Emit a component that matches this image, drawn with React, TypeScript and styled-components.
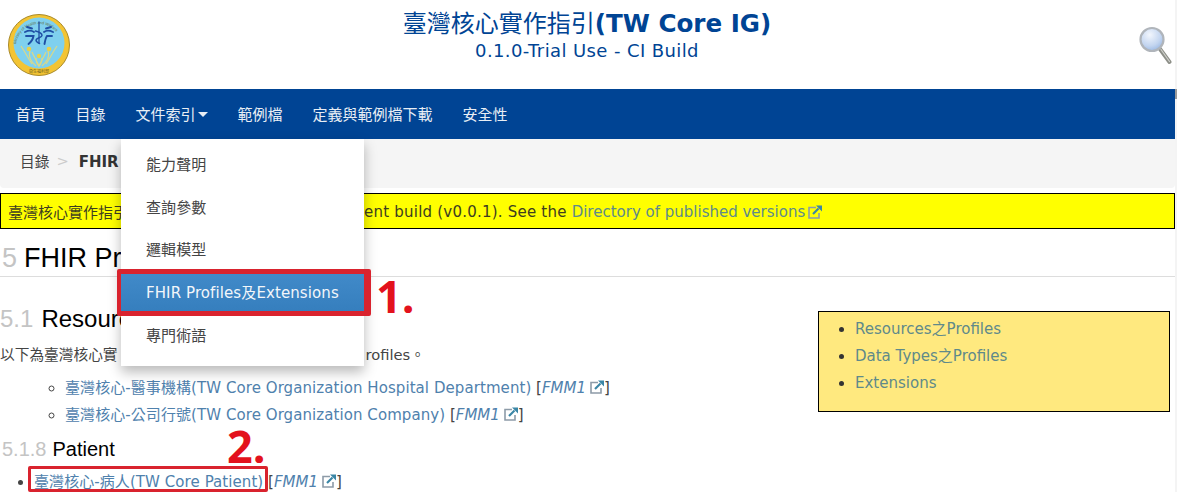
import React from 'react';
import styled, { createGlobalStyle } from 'styled-components';

const GlobalStyle = createGlobalStyle`
  html, body {
    margin: 0;
    padding: 0;
    height: 492px;
    overflow: hidden;
    background: #fff;
  }
  body {
    font-family: "DejaVu Sans", "Noto Sans CJK TC", sans-serif;
    font-size: 15px;
    color: #444;
  }
`;

const Page = styled.div`
  position: relative;
  width: 1175px;
  height: 492px;
  overflow: hidden;
`;

const ScrollTrack = styled.div`
  position: absolute;
  left: 1175px;
  top: 0;
  width: 2px;
  height: 492px;
  background: #f4f4f4;
  &::after {
    content: '';
    position: absolute;
    top: 89px;
    left: 0;
    width: 2px;
    height: 10px;
    background: #9a9a9a;
  }
`;

// HEADER
const Header = styled.header`
  display: flex;
  align-items: flex-start;
  justify-content: space-between;
  height: 89px;
  padding: 14px 3px 0 8px;
  box-sizing: border-box;
`;

const Titles = styled.div`
  flex: 1;
  text-align: center;
  color: #004494;
  padding-right: 35px;
`;

const Title = styled.div`
  font-size: 24.6px;
  font-weight: bold;
  line-height: 28px;
  margin-top: -4px;
`;

const TitleCjk = styled.span`
  font-size: 24px;
  font-weight: 400;
`;

const Subtitle = styled.div`
  font-size: 18px;
  letter-spacing: 0.4px;
  line-height: 26px;
`;

const SearchIcon = styled.svg`
  margin-top: 12px;
`;

// NAV
const Nav = styled.nav`
  display: flex;
  height: 50px;
  padding-left: 0.5px;
  background: #004494;
`;

const NavItem = styled.div`
  display: flex;
  align-items: center;
  gap: 2px;
  padding: 0 15px 1px;
  color: #e8eef5;
  font-size: 15px;
`;

const Caret = styled.span`
  width: 0;
  height: 0;
  margin-top: 1px;
  border-left: 5px solid transparent;
  border-right: 5px solid transparent;
  border-top: 5px solid #e8eef5;
`;

// BREADCRUMB
const Breadcrumb = styled.div`
  display: flex;
  align-items: center;
  height: 49px;
  padding: 0 20px 6px;
  box-sizing: border-box;
  background: #f5f5f5;
  border-radius: 0 0 4px 4px;
  font-size: 14.7px;
  color: #444;
`;

const Separator = styled.span`
  color: #ccc;
  margin: 0 10px 0 7px;
`;

const Current = styled.b`
  color: #333;
  font-size: 15px;
`;

const Notice = styled.div`
  margin-top: 5px;
  height: 36px;
  padding: 1px 7px 0;
  box-sizing: border-box;
  display: flex;
  align-items: center;
  white-space: pre;
  background: #ff0;
  border: 1px solid #000;
  color: #3d3d20;
`;

const Hidden = styled.span<{ $width: number }>`
  display: inline-block;
  width: ${p => p.$width}px;
`;

const Spaced = styled.span`
  letter-spacing: 0.22px;
`;

const NoticeLink = styled.span`
  color: #5d8a8a;
  margin-right: -1px;
`;

// CONTENT
const H1 = styled.h1`
  margin: 13px 0 0;
  padding-bottom: 1px;
  font: 400 27px/33px "Liberation Sans", "Noto Sans CJK TC", sans-serif;
  color: #000;
  border-bottom: 1px solid #ddd;
`;

const Num = styled.span<{ $gap: number; $inset?: number }>`
  color: #c4c4c4;
  margin-left: ${p => p.$inset ?? 0}px;
  margin-right: ${p => p.$gap}px;
`;

const Aside = styled.aside`
  float: right;
  width: 352px;
  height: 101px;
  box-sizing: border-box;
  margin: 34px 5px 0 0;
  background: #ffe97f;
  border: 1px solid #000;
`;

const AsideList = styled.ul`
  margin: 0;
  padding: 4px 0 0 36px;
  list-style: disc;
  color: #222;
`;

const AsideItem = styled.li`
  line-height: 27px;
  color: #333;
`;

const AsideLink = styled.span`
  color: #5f8a8a;
`;

const H2 = styled.h2`
  margin: 26px 0 0;
  font: 400 24px/32px "Liberation Sans", "Noto Sans CJK TC", sans-serif;
  color: #000;
`;

const Para = styled.p`
  margin: 9px 0 0;
  line-height: 22px;
  white-space: pre;
  font-size: 14.7px;
`;

const HiddenInline = styled.span`
  display: inline-block;
  width: 248px;
`;

const List = styled.ul<{ $kind: string; $indent: number }>`
  margin: 0;
  padding-left: ${p => p.$indent}px;
  list-style: ${p => p.$kind};
`;

const SubList = styled(List)`
  margin-top: 9px;
`;

const Item = styled.li`
  line-height: 27px;
  white-space: nowrap;
`;

const Link = styled.span`
  color: #4f81ad;
  letter-spacing: 0.07px;
`;

const Fmm = styled.i`
  color: #4f81ad;
`;

const H3 = styled.h3`
  margin: 6px 0 0 2px;
  font: 400 20px/28px "Liberation Sans", "Noto Sans CJK TC", sans-serif;
  color: #000;
`;

const PatientList = styled(List)`
  margin-top: 6px;
`;

// DROPDOWN
const Menu = styled.div`
  position: absolute;
  left: 121px;
  top: 139px;
  width: 243px;
  height: 227px;
  box-sizing: border-box;
  padding-top: 3px;
  background: #fff;
  box-shadow: 0 6px 12px rgba(0, 0, 0, 0.28);
`;

const MenuItem = styled.div<{ $active?: boolean }>`
  height: 42.75px;
  display: flex;
  align-items: center;
  padding-left: 25px;
  box-sizing: border-box;
  letter-spacing: 0.1px;
  color: ${p => (p.$active ? '#f2f6fa' : '#444')};
  background: ${p => (p.$active ? 'linear-gradient(#428bca, #357ebd)' : 'transparent')};
`;

// ANNOTATIONS
const RedBox = styled.div<{ $left: number; $top: number; $w: number; $h: number }>`
  position: absolute;
  left: ${p => p.$left}px;
  top: ${p => p.$top}px;
  width: ${p => p.$w}px;
  height: ${p => p.$h}px;
  box-sizing: border-box;
  border: 3px solid #d9232e;
  border-radius: 2px;
`;

const MenuRedBox = styled(RedBox)`
  border-width: 5px 7px 5px 4px;
`;

const Mark = styled.div<{ $left: number; $top: number }>`
  position: absolute;
  left: ${p => p.$left}px;
  top: ${p => p.$top}px;
  font: 700 45px/50px "Open Sans", sans-serif;
  color: #e3121d;
`;

function Logo() {
  return (
    <svg width="62" height="62" viewBox="0 0 62 62">
      <defs>
        <path id="logo-arc" d="M8 33a23 23 0 0 1 46 0" fill="none" />
      </defs>
      <circle cx="31" cy="31" r="30.5" fill="#f3c433" stroke="#a98a2a" strokeWidth="1" />
      <circle cx="31" cy="29" r="25.5" fill="#7fd0ee" />
      <text fontSize="3.9" fill="#5f6f3a" fontFamily="Liberation Sans, sans-serif">
        <textPath href="#logo-arc" startOffset="3">Ministry of Health and Welfare</textPath>
      </text>
      <text x="31" y="59" fontSize="4" fill="#6a5c20" textAnchor="middle" fontFamily="Noto Sans CJK TC, sans-serif">衛生福利部</text>
      <g fill="none" stroke="#1f4fa5" strokeWidth="1.9" strokeLinecap="round">
        <path d="M31 8v21" strokeWidth="1.3" />
        <path d="M19 13l5 1.5M17 18c3-1.5 7-1.5 9 0M18 22h7.5c-.5 3-2.5 6-5 8" />
        <path d="M43 13l-5 1.5M45 18c-3-1.5-7-1.5-9 0M44 22h-5c-1.5 2-2 5-2.5 8" />
        <path d="M27.5 17c4 1 6.5 2.5 6.5 4.5s-6 2.5-6 4.5 3.5 3.5 3.5 3.5" strokeWidth="1.5" />
      </g>
      <g fill="none" stroke="#d9d98a" strokeWidth="1.2">
        <path d="M13 32c4 6 7 12 11 18M49 32c-4 6-7 12-11 18" />
        <path d="M22 37c-2 5 1 11 6 15M40 37c2 5-1 11-6 15" />
        <path d="M24 38c2 5 5 9 7 14 2-5 5-9 7-14" />
        <path d="M28 44c0 3 1 6 3 8 2-2 3-5 3-8" />
      </g>
      <g fill="#e9d24a">
        <circle cx="21" cy="35" r="2.3" />
        <circle cx="41" cy="35" r="2.3" />
        <circle cx="31" cy="42" r="2.2" />
      </g>
    </svg>
  );
}

function Magnifier() {
  return (
    <SearchIcon width="33" height="39" viewBox="0 0 33 39">
      <defs>
        <radialGradient id="glass" cx="0.4" cy="0.3" r="0.8">
          <stop offset="0" stopColor="#f2f6fd" />
          <stop offset="0.6" stopColor="#c3d5f0" />
          <stop offset="1" stopColor="#8fb0e0" />
        </radialGradient>
      </defs>
      <path d="M21 23l9.5 13" stroke="#8d8f88" strokeWidth="4" strokeLinecap="round" />
      <path d="M22 23.5l8.5 12" stroke="#cfd0cb" strokeWidth="1.2" strokeLinecap="round" />
      <circle cx="13" cy="13.5" r="11.5" fill="url(#glass)" stroke="#b0b5bb" strokeWidth="2.2" />
    </SearchIcon>
  );
}

const ExtIcon = styled.svg`
  margin-left: 4px;
  vertical-align: -1px;
`;

function External() {
  return (
    <ExtIcon width="14" height="14" viewBox="0 0 14 14">
      <path d="M8 2.5H1v10.500h10V8" fill="none" stroke="#8d9ba8" strokeWidth="1.6" />
      <path d="M5 9l5.500-5.500" stroke="#3a86a6" strokeWidth="2.2" />
      <path d="M8 0.5H14V6.500z" fill="#3a86a6" />
    </ExtIcon>
  );
}

function Maturity() {
  return (
    <>
      {' ['}
      <Fmm>FMM1</Fmm>
      <External />
      {']'}
    </>
  );
}

const menuItems = ['能力聲明', '查詢參數', '邏輯模型', 'FHIR Profiles及Extensions', '專門術語'];
const navItems = ['首頁', '目錄', '文件索引', '範例檔', '定義與範例檔下載', '安全性'];
const asideItems = ['Resources之Profiles', 'Data Types之Profiles', 'Extensions'];

export default function App() {
  return (
    <>
      <GlobalStyle />
      <Page>
        <Header>
          <Logo />
          <Titles>
            <Title>
              <TitleCjk>臺灣核心實作指引</TitleCjk>(TW Core IG)
            </Title>
            <Subtitle>0.1.0-Trial Use - CI Build</Subtitle>
          </Titles>
          <Magnifier />
        </Header>
        <Nav>
          {navItems.map(name => (
            <NavItem key={name}>
              {name}
              {name === '文件索引' && <Caret />}
            </NavItem>
          ))}
        </Nav>
        <Breadcrumb>
          目錄
          <Separator>&gt;</Separator>
          <Current>FHIR Profiles及Extensions</Current>
        </Breadcrumb>
        <Notice>
          臺灣核心實作指引
          <Hidden $width={236} />
          <Spaced>ent build (v0.0.1). See the </Spaced>
          <NoticeLink>Directory of published versions</NoticeLink>
          <External />
        </Notice>
        <H1>
          <Num $gap={7} $inset={2}>5</Num>FHIR Profiles及Extensions
        </H1>
        <Aside>
          <AsideList>
            {asideItems.map(name => (
              <AsideItem key={name}>
                <AsideLink>{name}</AsideLink>
              </AsideItem>
            ))}
          </AsideList>
        </Aside>
        <H2>
          <Num $gap={8}>5.1</Num>Resources之Profiles
        </H2>
        <Para>
          以下為臺灣核心實
          <HiddenInline />
          rofiles。
        </Para>
        <SubList $kind="circle" $indent={65}>
          <Item>
            <Link>臺灣核心-醫事機構(TW Core Organization Hospital Department)</Link>
            <Maturity />
          </Item>
          <Item>
            <Link>臺灣核心-公司行號(TW Core Organization Company)</Link>
            <Maturity />
          </Item>
        </SubList>
        <H3>
          <Num $gap={6}>5.1.8</Num>Patient
        </H3>
        <PatientList $kind="disc" $indent={34}>
          <Item>
            <Link>臺灣核心-病人(TW Core Patient)</Link>
            <Maturity />
          </Item>
        </PatientList>
        <Menu>
          {menuItems.map(name => (
            <MenuItem key={name} $active={name.startsWith('FHIR')}>
              {name}
            </MenuItem>
          ))}
        </Menu>
        <MenuRedBox $left={117} $top={269} $w={254} $h={47} />
        <RedBox $left={28} $top={466} $w={240} $h={26} />
        <Mark $left={376} $top={271}>1.</Mark>
        <Mark $left={227} $top={421}>2.</Mark>
      </Page>
      <ScrollTrack />
    </>
  );
}
